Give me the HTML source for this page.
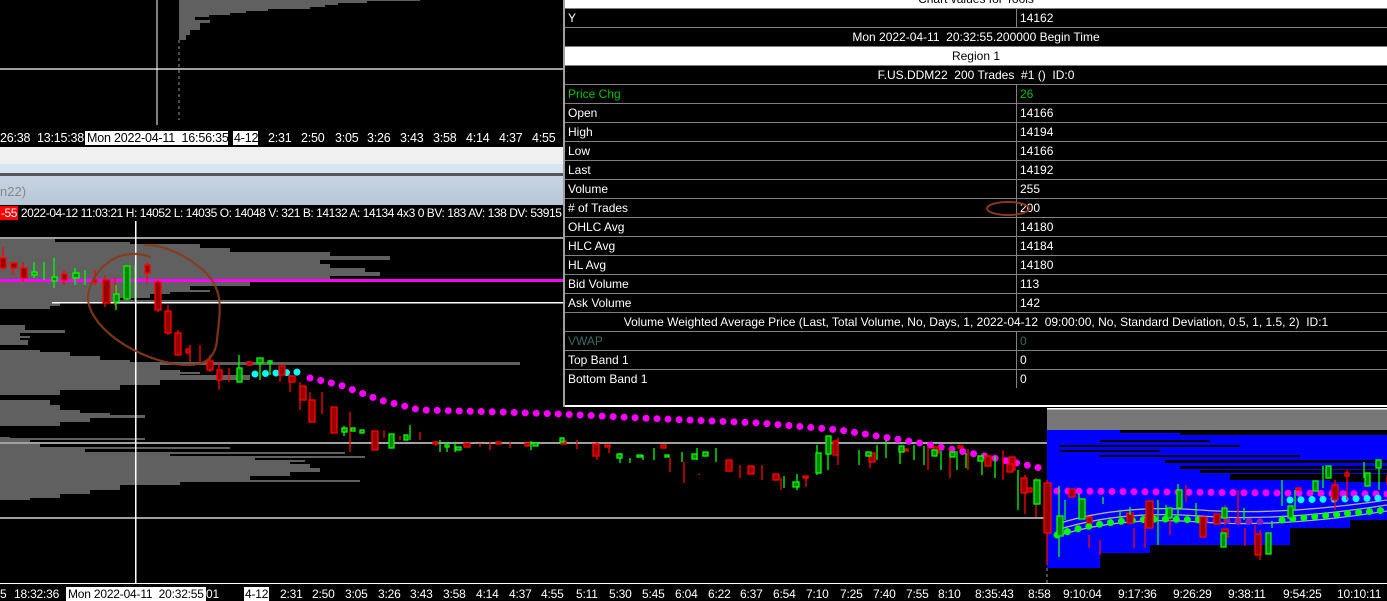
<!DOCTYPE html>
<html><head><meta charset="utf-8"><style>
*{margin:0;padding:0;box-sizing:border-box}
body{width:1387px;height:601px;background:#000;position:relative;overflow:hidden;font-family:"Liberation Sans",sans-serif;font-size:12px;color:#fff}
.a{position:absolute;white-space:nowrap}
.ax span{position:absolute;top:0;letter-spacing:-0.2px}
.box{background:#fff;color:#000;padding:0 2px}
#tb{position:absolute;left:563px;top:-10px;width:824px;border-left:2px solid #a0a0a0;background:#000}
#tb .r{height:19px;border-bottom:1px solid #808080;position:relative;line-height:18px;padding-left:3px;background:#000}
#tb .r .v{position:absolute;left:451px;top:0;height:18px;border-left:1px solid #808080;padding-left:3px}
#tb .c{text-align:center;padding-left:0}
#tb .w{background:#fff;color:#000}
</style></head><body>

<svg class="a" style="left:0;top:0" width="563" height="125">
<rect x="0" y="68" width="563" height="2" fill="#a0a0a0"/>
<rect x="156.5" y="0" width="1" height="125" fill="#fff"/>
<line x1="179" y1="40" x2="179" y2="120" stroke="#999" stroke-dasharray="3 3"/>
<path d="M179 0H420V1H367V3H338V5H325V7H310V9H268V11H246V13H230V15H209V17H195V20H179Z" fill="#606060"/>
<path d="M179 20V40H186V35H190V30H200V23H210V20Z" fill="#606060"/>
</svg>

<div class="a ax" style="left:0;top:131px;width:563px;height:16px;font-size:12.5px">
<span style="left:0">26:38</span><span style="left:37px">13:15:38</span>
<span class="box" style="left:85px;width:143px">Mon 2022-04-11&nbsp; 16:56:35</span>
<span class="box" style="left:233px;width:25px;padding:0 1px">4-12</span>
<span style="left:268px">2:31</span><span style="left:301px">2:50</span><span style="left:335px">3:05</span><span style="left:367px">3:26</span><span style="left:400px">3:43</span><span style="left:433px">3:58</span><span style="left:466px">4:14</span><span style="left:499px">4:37</span><span style="left:532px">4:55</span>
</div>
<div class="a" style="left:0;top:147px;width:563px;height:26px;background:#f0f0f0;border-bottom:1px solid #d8d8d8"></div>
<div class="a" style="left:0;top:164px;width:563px;height:10px;background:#d8e4f0"></div>
<div class="a" style="left:0;top:173px;width:563px;height:3px;background:#555"></div>
<div class="a" style="left:0;top:176px;width:563px;height:29px;background:linear-gradient(#c8d4e2,#b8c6d6);color:#888;font-size:13px;line-height:32px">n22)</div>
<div class="a" style="left:0;top:205px;width:563px;height:17px;line-height:17px;font-size:12px;letter-spacing:-0.45px;overflow:hidden"><span style="background:#f00;padding:0 1px">-55</span> 2022-04-12 11:03:21 H: 14052 L: 14035 O: 14048 V: 321 B: 14132 A: 14134 4x3 0 BV: 183 AV: 138 DV: 53915</div>

<svg class="a" style="left:0;top:221px" width="1387" height="362" viewBox="0 221 1387 362">
<g fill="#606060">
<path d="M0 238H55V242H130V244H200V248H230V252H330V256H390V260H320V264H330V268H365V272H380V276H330V281H250V286H190V290H170V294H150V298H120V303H60V306H50V309H0Z"/>
<rect x="0" y="300" width="280" height="3"/><rect x="0" y="290" width="210" height="2"/>
<path d="M0 325H25V330H65V333H20V340H28V345H0Z"/><rect x="0" y="336" width="30" height="2"/>
<path d="M0 350H40V352H70V356H100V360H130V365H160V370H180V375H250V380H160V385H120V390H60V395H0Z"/>
<rect x="0" y="362" width="520" height="3"/><rect x="0" y="372" width="200" height="2"/>
<path d="M0 400H50V405H60V410H80V415H145V418H90V422H60V426H0Z"/><rect x="0" y="413" width="110" height="2"/>
<path d="M0 437H10V440H30V444H40V447H85V452H170V456H255V460H290V464H310V468H320V472H290V476H250V480H180V485H120V490H90V494H60V498H30V500H0Z"/>
<rect x="0" y="438" width="145" height="2"/><rect x="0" y="447" width="230" height="2"/><rect x="0" y="452" width="345" height="2"/><rect x="0" y="456" width="365" height="2"/><rect x="0" y="460" width="305" height="2"/><rect x="0" y="468" width="210" height="2"/><rect x="0" y="480" width="360" height="2"/>
</g>
<rect x="0" y="237" width="563" height="2" fill="#a0a0a0"/>
<rect x="0" y="279" width="563" height="3" fill="#ff00ff"/>
<rect x="52" y="302" width="511" height="1.5" fill="#fff"/>
<rect x="0" y="442" width="1047" height="2" fill="#a0a0a0"/>
<rect x="0" y="517" width="1047" height="2" fill="#a0a0a0"/>
<rect x="1047" y="409" width="340" height="21" fill="#777"/>
<rect x="1047" y="430" width="340" height="138" fill="#0000ff"/>
<g fill="#000">
<rect x="1120" y="430" width="267" height="3"/><rect x="1180" y="433" width="207" height="2"/><rect x="1100" y="440" width="110" height="2"/><rect x="1060" y="445" width="180" height="2"/><rect x="1060" y="450" width="100" height="2"/><rect x="1100" y="455" width="200" height="2"/>
<rect x="1165" y="460" width="222" height="3"/><rect x="1180" y="466" width="207" height="3"/><rect x="1200" y="470" width="187" height="3"/><rect x="1230" y="474" width="157" height="6"/><rect x="1330" y="480" width="57" height="2"/>
<rect x="1350" y="520" width="37" height="48"/><rect x="1290" y="528" width="97" height="40"/><rect x="1150" y="545" width="237" height="23"/><rect x="1100" y="553" width="287" height="15"/><rect x="1105" y="560" width="50" height="2"/>
</g>
<rect x="1047" y="408" width="340" height="1.5" fill="#fff"/>
<line x1="1047" y1="568" x2="1047" y2="583" stroke="#999" stroke-dasharray="3 3"/>
<g fill="none" stroke="#b0b0b0" stroke-width="1.3">
<path d="M1057 530 Q1120 510 1200 516 T1387 505"/><path d="M1057 524 Q1120 504 1200 510 T1387 500"/><path d="M1057 536 Q1120 516 1200 522 T1387 511"/>
</g>
<g fill="none" stroke-linecap="round" stroke-width="7">
<path d="M310 378 L340 385 L380 400 L420 410 L500 412 L560 414 L640 418 L760 423 L840 430 L920 443 L980 455 L1040 468" stroke="#ff00ff" stroke-dasharray="0 11"/>
<path d="M1057 491 L1387 494" stroke="#ff00ff" stroke-dasharray="0 11"/>
<path d="M1290 500 L1387 498" stroke="#00ffff" stroke-dasharray="0 11"/>
<path d="M255 374 L300 372" stroke="#00ffff" stroke-dasharray="0 10.5"/>
<path d="M1057 535 Q1100 520 1160 519 L1200 520" stroke="#00ff00" stroke-dasharray="0 11"/>
<path d="M1205 520 L1270 522" stroke="#8020c0" stroke-dasharray="0 11"/>
<path d="M1282 520 Q1330 515 1387 510" stroke="#00ff00" stroke-dasharray="0 11"/>
</g>
<g stroke-width="1.3">
<g stroke="#f00" fill="#900">
<path d="M3 247V270M13 262V275M23 262V282M64 270V285M95 270V285M105 275V307M115 278V306M147 262V283M158 280V312M168 305V335M178 330V355M190 345V362M200 345V363M210 355V372M219 362V390M229 368V382M249 361V366M280 370V382M290 375V392M300 382V410M310 392V415M322 392V414M350 412V452M384 430V438M400 436V440M420 432V440M436 441V446M480 443V447M490 442V450M510 442V448M577 440V449M597 442V460M609 448V453M638 455V458M670 458V472M684 462V483M699 474V475M731 460V465M740 465V478M762 465V480M781 478V490M806 478V487M838 438V465M870 452V468M928 445V470M950 448V478M968 449V470M1003 450V480M1025 475V514M1036 478V517M1047 480V565M1089 535V548M1100 540V555M1134 528V548M1145 518V548M1170 515V535M1186 485V502M1225 505V525M1238 490V525M1245 528V546M1255 525V542M1260 530V560M1335 480V510M1347 470V500M1387 475V485"/>
<rect x="0" y="258" width="6" height="10"/><rect x="11" y="263" width="6" height="5"/><rect x="21" y="268" width="6" height="10"/><rect x="62" y="274" width="5" height="6"/><rect x="93" y="280" width="4" height="2"/><rect x="103" y="280" width="7" height="23"/><rect x="145" y="265" width="5" height="8"/><rect x="155" y="282" width="6" height="28"/><rect x="165" y="311" width="6" height="22"/><rect x="175" y="333" width="6" height="22"/><rect x="186" y="349" width="4" height="4"/><rect x="207" y="361" width="6" height="9"/><rect x="217" y="370" width="5" height="10"/><rect x="247" y="362" width="5" height="3"/><rect x="279" y="366" width="6" height="9"/><rect x="289" y="376" width="6" height="6"/><rect x="300" y="386" width="6" height="14"/><rect x="309" y="400" width="6" height="22"/><rect x="331" y="407" width="6" height="26"/><rect x="372" y="431" width="6" height="19"/><rect x="433" y="442" width="5" height="2"/><rect x="464" y="443" width="6" height="4"/><rect x="496" y="442" width="5" height="2"/><rect x="525" y="443" width="5" height="3"/><rect x="561" y="441" width="5" height="3"/><rect x="593" y="444" width="6" height="12"/><rect x="605" y="445" width="5" height="2"/><rect x="661" y="445" width="5" height="3"/><rect x="726" y="460" width="6" height="11"/><rect x="748" y="466" width="6" height="8"/><rect x="773" y="474" width="6" height="6"/><rect x="803" y="476" width="5" height="2"/><rect x="833" y="441" width="5" height="14"/><rect x="869" y="453" width="6" height="9"/><rect x="903" y="449" width="5" height="2"/><rect x="933" y="447" width="6" height="6"/><rect x="958" y="446" width="5" height="2"/><rect x="985" y="456" width="6" height="10"/><rect x="1009" y="457" width="6" height="13"/><rect x="1021" y="478" width="6" height="15"/><rect x="1027" y="488" width="5" height="4"/><rect x="1007" y="464" width="6" height="8"/><rect x="1044" y="483" width="7" height="50"/><rect x="1069" y="489" width="6" height="8"/><rect x="1087" y="517" width="5" height="6"/><rect x="1127" y="513" width="6" height="10"/><rect x="1146" y="501" width="7" height="27"/><rect x="1200" y="517" width="6" height="20"/><rect x="1214" y="514" width="6" height="10"/><rect x="1222" y="529" width="6" height="8"/><rect x="1255" y="534" width="6" height="21"/><rect x="1296" y="488" width="5" height="2"/><rect x="1332" y="485" width="6" height="15"/><rect x="1345" y="473" width="4" height="3"/></g>
<g stroke="#0f0" fill="#080">
<path d="M34 262V278M44 262V280M54 258V288M75 268V285M85 270V285M116 285V310M127 268V300M135 265V300M239 355V382M260 362V380M270 360V375M344 426V436M410 425V440M440 440V452M447 442V452M455 442V452M531 441V450M620 453V463M630 458V463M643 455V460M654 448V460M682 452V462M697 448V460M716 448V462M784 476V488M797 474V490M817 445V475M828 437V470M859 450V465M877 445V460M886 440V458M900 448V464M914 445V460M924 446V465M941 451V470M957 451V470M966 453V468M982 455V475M995 456V478M1018 470V510M1059 486V557M1065 500V520M1079 494V500M1103 497V504M1120 510V520M1130 507V515M1158 500V545M1166 505V520M1178 484V517M1196 503V520M1244 508V520M1272 521V528M1282 480V506M1295 490V510M1323 466V488M1364 462V478M1379 462V490"/>
<rect x="32" y="272" width="5" height="3"/><rect x="52" y="277" width="5" height="4"/><rect x="73" y="273" width="6" height="5"/><rect x="114" y="294" width="5" height="8"/><rect x="124" y="266" width="6" height="33"/><rect x="237" y="368" width="5" height="14"/><rect x="257" y="358" width="6" height="5"/><rect x="268" y="361" width="4" height="2"/><rect x="342" y="428" width="5" height="4"/><rect x="351" y="428" width="4" height="3"/><rect x="360" y="430" width="4" height="3"/><rect x="389" y="434" width="5" height="14"/><rect x="404" y="435" width="4" height="5"/><rect x="445" y="445" width="4" height="2"/><rect x="456" y="447" width="5" height="3"/><rect x="533" y="443" width="5" height="3"/><rect x="560" y="438" width="4" height="4"/><rect x="617" y="454" width="5" height="4"/><rect x="637" y="455" width="5" height="2"/><rect x="665" y="455" width="4" height="2"/><rect x="692" y="454" width="5" height="5"/><rect x="703" y="452" width="5" height="4"/><rect x="793" y="482" width="6" height="5"/><rect x="816" y="453" width="5" height="20"/><rect x="826" y="436" width="5" height="18"/><rect x="866" y="452" width="5" height="4"/><rect x="899" y="446" width="5" height="6"/><rect x="932" y="450" width="5" height="6"/><rect x="950" y="452" width="5" height="5"/><rect x="978" y="456" width="5" height="5"/><rect x="1034" y="480" width="6" height="24"/><rect x="1057" y="516" width="6" height="20"/><rect x="1079" y="499" width="6" height="20"/><rect x="1167" y="508" width="5" height="10"/><rect x="1177" y="490" width="5" height="18"/><rect x="1222" y="508" width="5" height="10"/><rect x="1221" y="533" width="5" height="14"/><rect x="1266" y="533" width="5" height="21"/><rect x="1288" y="506" width="5" height="12"/><rect x="1313" y="481" width="5" height="10"/><rect x="1326" y="466" width="5" height="12"/><rect x="1365" y="473" width="5" height="13"/><rect x="1376" y="460" width="5" height="8"/></g>
</g>
<rect x="135" y="221" width="1.5" height="362" fill="#fff"/>
<g fill="none" stroke="#8a3a1a" stroke-width="2.2" stroke-linecap="round" opacity=".9">
<path d="M150 257 C118 245 92 270 88 295 C86 320 120 350 165 362 C200 370 215 362 217 340 C220 310 225 290 203 270 C185 255 165 245 145 245"/>
</g>
</svg>

<div class="a" style="left:0;top:583px;width:1387px;height:1px;background:#fff"></div>
<div class="a ax" style="left:0;top:587px;width:1387px;height:14px">
<span style="left:0">5</span><span style="left:14px">18:32:36</span>
<span class="box" style="left:66px">Mon 2022-04-11&nbsp; 20:32:55</span>
<span style="left:206px">01</span>
<span class="box" style="left:244px;padding:0 1px">4-12</span>
<span style="left:280px">2:31</span><span style="left:312px">2:50</span><span style="left:345px">3:05</span><span style="left:378px">3:26</span><span style="left:410px">3:43</span><span style="left:443px">3:58</span><span style="left:476px">4:14</span><span style="left:509px">4:37</span><span style="left:541px">4:55</span><span style="left:576px">5:11</span><span style="left:609px">5:30</span><span style="left:642px">5:45</span><span style="left:675px">6:04</span><span style="left:708px">6:22</span><span style="left:740px">6:37</span><span style="left:773px">6:54</span><span style="left:806px">7:10</span><span style="left:840px">7:25</span><span style="left:873px">7:40</span><span style="left:906px">7:55</span><span style="left:938px">8:10</span><span style="left:975px">8:35:43</span><span style="left:1028px">8:58</span><span style="left:1063px">9:10:04</span><span style="left:1118px">9:17:36</span><span style="left:1173px">9:26:29</span><span style="left:1228px">9:38:11</span><span style="left:1283px">9:54:25</span><span style="left:1337px">10:10:11</span>
</div>

<div id="tb">
<div class="r c w">Chart values for Tools</div>
<div class="r">Y<span class="v">14162</span></div>
<div class="r c">Mon 2022-04-11&nbsp; 20:32:55.200000 Begin Time</div>
<div class="r c w">Region 1</div>
<div class="r c">F.US.DDM22&nbsp; 200 Trades&nbsp; #1 ()&nbsp; ID:0</div>
<div class="r" style="color:#00c000">Price Chg<span class="v">26</span></div>
<div class="r">Open<span class="v">14166</span></div>
<div class="r">High<span class="v">14194</span></div>
<div class="r">Low<span class="v">14166</span></div>
<div class="r">Last<span class="v">14192</span></div>
<div class="r">Volume<span class="v">255</span></div>
<div class="r"># of Trades<span class="v">200</span><svg class="a" style="left:420px;top:1px" width="70" height="17"><ellipse cx="23" cy="8.5" rx="21" ry="6.5" fill="none" stroke="#8a3a1a" stroke-width="2"/></svg></div>
<div class="r">OHLC Avg<span class="v">14180</span></div>
<div class="r">HLC Avg<span class="v">14184</span></div>
<div class="r">HL Avg<span class="v">14180</span></div>
<div class="r">Bid Volume<span class="v">113</span></div>
<div class="r">Ask Volume<span class="v">142</span></div>
<div class="r c">Volume Weighted Average Price (Last, Total Volume, No, Days, 1, 2022-04-12&nbsp; 09:00:00, No, Standard Deviation, 0.5, 1, 1.5, 2)&nbsp; ID:1</div>
<div class="r" style="color:#3a6a6a">VWAP<span class="v">0</span></div>
<div class="r">Top Band 1<span class="v">0</span></div>
<div class="r" style="border-bottom:none">Bottom Band 1<span class="v">0</span></div>
<div style="height:18px;border-bottom:2px solid #fff"></div>
</div>
</body></html>
